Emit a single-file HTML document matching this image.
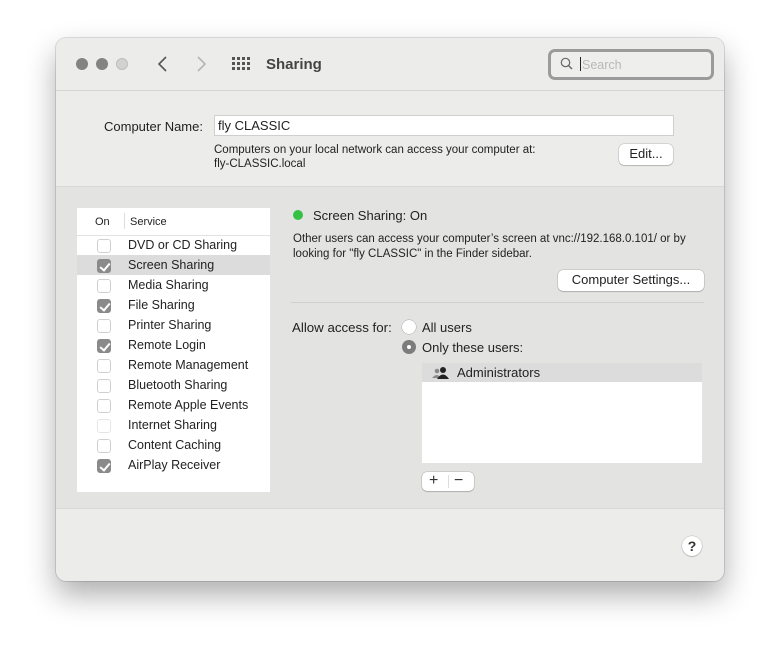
<!DOCTYPE html>
<html><head><style>
*{margin:0;padding:0;box-sizing:border-box}
body{width:780px;height:656px;background:#fff;font-family:"Liberation Sans",sans-serif;color:#222;position:relative;overflow:hidden}
.win{position:absolute;left:56px;top:38px;width:668px;height:543px;background:#ecedea;border-radius:10px;box-shadow:0 14px 30px rgba(0,0,0,.32),0 0 0 1px rgba(0,0,0,.12);overflow:hidden}
.a{position:absolute}
.t{position:absolute;white-space:nowrap;font-size:12.5px}
.cb{position:absolute;left:20px;width:14px;height:14px;border-radius:3px;background:#fff;border:1px solid #d0d0d0}
.cb.on{background:#8a8a8a;border-color:#8a8a8a}
.cb.on::after{content:"";position:absolute;left:4px;top:1px;width:4px;height:8px;border:solid #fff;border-width:0 2px 2px 0;transform:rotate(40deg)}
.cb.dim{border-color:#e6e6e6}
.row{position:absolute;left:0;width:193px;height:20px}
.row span{position:absolute;left:51px;top:3px;font-size:12.5px;white-space:nowrap}
.btn{position:absolute;background:#fff;border-radius:5px;box-shadow:0 0 0 .5px rgba(0,0,0,.2),0 1px 1px rgba(0,0,0,.15);font-size:13px;text-align:center}
</style></head><body>
<div class="win">
 <div class="a" style="left:0;top:52px;width:668px;height:1px;background:#d6d6d4"></div>
 <div class="a" style="left:20px;top:20px;width:12px;height:12px;border-radius:50%;background:#838383"></div>
 <div class="a" style="left:40px;top:20px;width:12px;height:12px;border-radius:50%;background:#838383"></div>
 <div class="a" style="left:60px;top:20px;width:12px;height:12px;border-radius:50%;background:#d2d2d2;border:1px solid #bdbdbd"></div>
 <svg class="a" style="left:100px;top:17px" width="14" height="18"><path d="M10 2 L3 9 L10 16" stroke="#555" stroke-width="1.6" fill="none"/></svg>
 <svg class="a" style="left:138px;top:17px" width="14" height="18"><path d="M4 2 L11 9 L4 16" stroke="#b5b5b5" stroke-width="1.6" fill="none"/></svg>
 <svg class="a" style="left:176px;top:19px" width="20" height="15"><g fill="#555"><rect x="0" y="0" width="3" height="3"/><rect x="5" y="0" width="3" height="3"/><rect x="10" y="0" width="3" height="3"/><rect x="15" y="0" width="3" height="3"/><rect x="0" y="5" width="3" height="3"/><rect x="5" y="5" width="3" height="3"/><rect x="10" y="5" width="3" height="3"/><rect x="15" y="5" width="3" height="3"/><rect x="0" y="10" width="3" height="3"/><rect x="5" y="10" width="3" height="3"/><rect x="10" y="10" width="3" height="3"/><rect x="15" y="10" width="3" height="3"/></g></svg>
 <div class="t" style="left:210px;top:18px;font-size:15px;font-weight:bold;color:#444">Sharing</div>
 <div class="a" style="left:492px;top:11px;width:166px;height:31px;border:3px solid #9b9b9b;border-radius:7px;background:#eeefec"></div>
 <svg class="a" style="left:504px;top:19px" width="14" height="14"><circle cx="5.5" cy="5.5" r="4.2" stroke="#666" stroke-width="1.2" fill="none"/><path d="M8.6 8.6 L12 12" stroke="#666" stroke-width="1.4"/></svg>
 <div class="a" style="left:524px;top:19px;width:1px;height:14px;background:#222"></div>
 <div class="t" style="left:526px;top:20px;color:#b8b8b8;font-size:12.5px">Search</div>

 <div class="t" style="left:48px;top:81px;font-size:13px">Computer Name:</div>
 <div class="a" style="left:158px;top:77px;width:460px;height:21px;background:#fff;border:1px solid #cfcfcf"></div>
 <div class="t" style="left:162px;top:80px;font-size:13px">fly CLASSIC</div>
 <div class="t" style="left:158px;top:105px;font-size:11.5px;line-height:14px">Computers on your local network can access your computer at:<br>fly-CLASSIC.local</div>
 <div class="btn" style="left:563px;top:106px;width:54px;height:21px;line-height:20px">Edit...</div>

 <div class="a" style="left:0;top:148px;width:668px;height:323px;background:#e3e4e1;border-top:1px solid #d8d8d6;border-bottom:1px solid #d8d8d6"></div>
 <div class="a" style="left:21px;top:170px;width:193px;height:284px;background:#fff">
  <div class="t" style="left:18px;top:8px;font-size:11px">On</div>
  <div class="a" style="left:47px;top:5px;width:1px;height:16px;background:#ddd"></div>
  <div class="t" style="left:53px;top:8px;font-size:11px">Service</div>
  <div class="a" style="left:0;top:27px;width:193px;height:1px;background:#e2e2e2"></div>
  <div class="row" style="top:27px"><div class="cb" style="top:4px"></div><span>DVD or CD Sharing</span></div>
  <div class="row" style="top:47px;background:#dcdcdc"><div class="cb on" style="top:4px"></div><span>Screen Sharing</span></div>
  <div class="row" style="top:67px"><div class="cb" style="top:4px"></div><span>Media Sharing</span></div>
  <div class="row" style="top:87px"><div class="cb on" style="top:4px"></div><span>File Sharing</span></div>
  <div class="row" style="top:107px"><div class="cb" style="top:4px"></div><span>Printer Sharing</span></div>
  <div class="row" style="top:127px"><div class="cb on" style="top:4px"></div><span>Remote Login</span></div>
  <div class="row" style="top:147px"><div class="cb" style="top:4px"></div><span>Remote Management</span></div>
  <div class="row" style="top:167px"><div class="cb" style="top:4px"></div><span>Bluetooth Sharing</span></div>
  <div class="row" style="top:187px"><div class="cb" style="top:4px"></div><span>Remote Apple Events</span></div>
  <div class="row" style="top:207px"><div class="cb dim" style="top:4px"></div><span>Internet Sharing</span></div>
  <div class="row" style="top:227px"><div class="cb" style="top:4px"></div><span>Content Caching</span></div>
  <div class="row" style="top:247px"><div class="cb on" style="top:4px"></div><span>AirPlay Receiver</span></div>
 </div>
 <div class="a" style="left:237px;top:172px;width:10px;height:10px;border-radius:50%;background:#35c144"></div>
 <div class="t" style="left:257px;top:170px;font-size:13px">Screen Sharing: On</div>
 <div class="t" style="left:237px;top:194px;font-size:11.5px;line-height:15px">Other users can access your computer’s screen at vnc://192.168.0.101/ or by<br>looking for "fly CLASSIC" in the Finder sidebar.</div>
 <div class="btn" style="left:502px;top:232px;width:146px;height:21px;line-height:20px">Computer Settings...</div>
 <div class="a" style="left:235px;top:264px;width:413px;height:1px;background:#d0d0ce"></div>
 <div class="t" style="left:236px;top:282px;font-size:13.3px">Allow access for:</div>
 <div class="a" style="left:346px;top:282px;width:14px;height:14px;border-radius:50%;background:#fff;box-shadow:0 0 0 .5px rgba(0,0,0,.25)"></div>
 <div class="t" style="left:366px;top:282px;font-size:13px">All users</div>
 <div class="a" style="left:346px;top:302px;width:14px;height:14px;border-radius:50%;background:#7c7c7c"></div>
 <div class="a" style="left:351px;top:307px;width:4px;height:4px;border-radius:50%;background:#fff"></div>
 <div class="t" style="left:366px;top:302px;font-size:13px">Only these users:</div>
 <div class="a" style="left:366px;top:325px;width:280px;height:100px;background:#fff"></div>
 <div class="a" style="left:366px;top:325px;width:280px;height:19px;background:#dcdcdc"></div>
 <svg class="a" style="left:376px;top:328px" width="20" height="14"><circle cx="5" cy="5" r="2.3" fill="#888"/><path d="M0 12 Q5 6 9 12Z" fill="#888"/><circle cx="11" cy="4" r="3" fill="#222"/><path d="M5 13 Q11 4 17 13Z" fill="#222"/></svg>
 <div class="t" style="left:401px;top:327px;font-size:13px">Administrators</div>
 <div class="btn" style="left:366px;top:434px;width:52px;height:19px"></div>
 <div class="a" style="left:392px;top:437px;width:1px;height:13px;background:#ddd"></div>
 <div class="t" style="left:373px;top:435px;font-size:16px;line-height:16px;color:#333">+</div>
 <div class="t" style="left:398px;top:435px;font-size:16px;line-height:16px;color:#333">−</div>

 <div class="btn" style="left:626px;top:498px;width:20px;height:20px;border-radius:50%;line-height:20px;font-size:14px;font-weight:bold;color:#333">?</div>
</div>
</body></html>
